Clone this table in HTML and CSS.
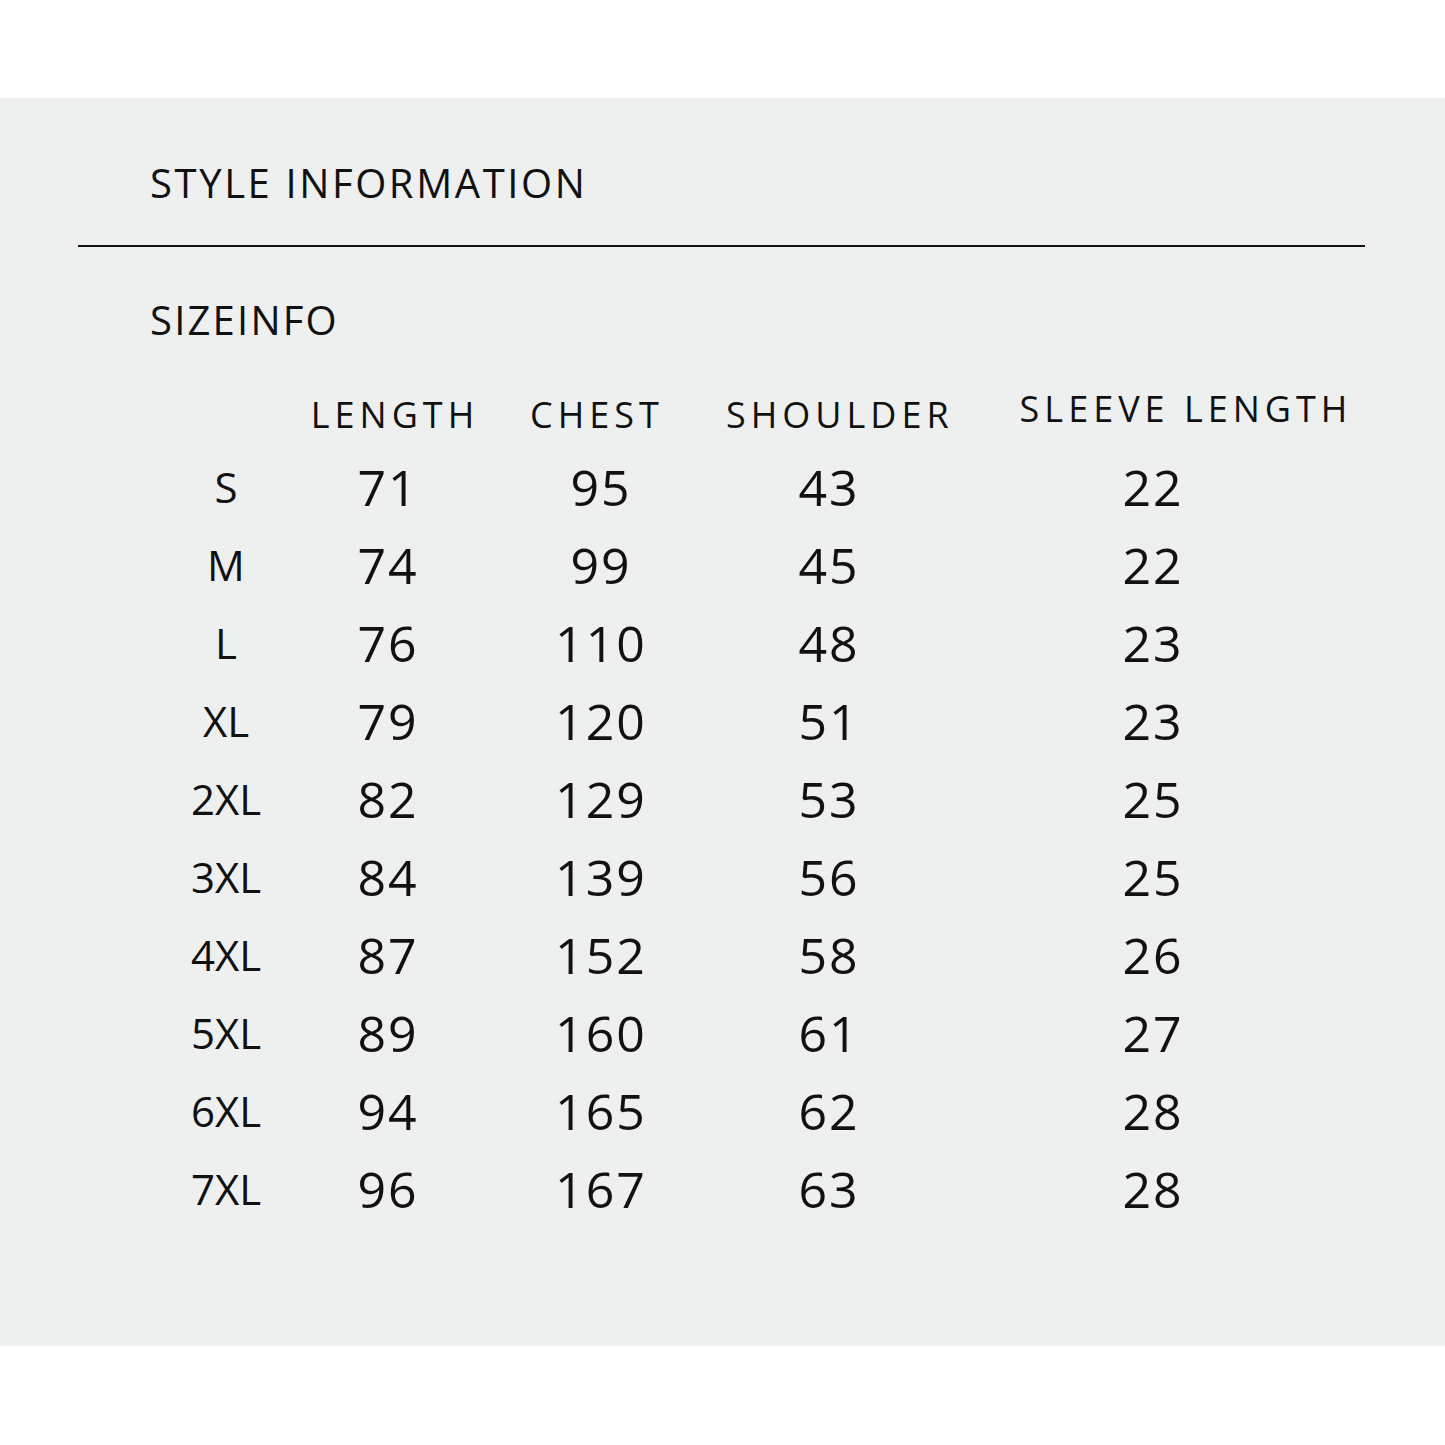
FILE: index.html
```html
<!DOCTYPE html>
<html>
<head>
<meta charset="utf-8">
<link rel="stylesheet" href="styles.css">
</head>
<body>
<div class="panel">
  <div class="title">STYLE INFORMATION</div>
  <div class="rule"></div>
  <div class="subtitle">SIZEINFO</div>
  <div class="table">
    <div class="hd"></div>
    <div class="hd h-len">LENGTH</div>
    <div class="hd h-chest">CHEST</div>
    <div class="hd h-sh">SHOULDER</div>
    <div class="hd h-sl">SLEEVE LENGTH</div>

    <div class="sz">S</div><div class="num">71</div><div class="num">95</div><div class="num">43</div><div class="num">22</div>
    <div class="sz">M</div><div class="num">74</div><div class="num">99</div><div class="num">45</div><div class="num">22</div>
    <div class="sz">L</div><div class="num">76</div><div class="num">110</div><div class="num">48</div><div class="num">23</div>
    <div class="sz">XL</div><div class="num">79</div><div class="num">120</div><div class="num">51</div><div class="num">23</div>
    <div class="sz">2XL</div><div class="num">82</div><div class="num">129</div><div class="num">53</div><div class="num">25</div>
    <div class="sz">3XL</div><div class="num">84</div><div class="num">139</div><div class="num">56</div><div class="num">25</div>
    <div class="sz">4XL</div><div class="num">87</div><div class="num">152</div><div class="num">58</div><div class="num">26</div>
    <div class="sz">5XL</div><div class="num">89</div><div class="num">160</div><div class="num">61</div><div class="num">27</div>
    <div class="sz">6XL</div><div class="num">94</div><div class="num">165</div><div class="num">62</div><div class="num">28</div>
    <div class="sz">7XL</div><div class="num">96</div><div class="num">167</div><div class="num">63</div><div class="num">28</div>
  </div>
</div>
</body>
</html>
```

FILE: styles.css
```css
html, body {
  margin: 0;
  padding: 0;
  background: #ffffff;
}
body {
  font-family: "Open Sans", "Noto Sans", sans-serif;
  color: #111111;
}
.panel {
  margin-top: 98px;
  height: 1248px;
  box-sizing: border-box;
  background: #eef0f0;
  padding-top: 65px;
}
.title {
  padding-left: 150px;
  font-size: 40px;
  line-height: 40px;
  letter-spacing: 2.6px;
  margin-bottom: 42px;
}
.rule {
  margin-left: 78px;
  width: 1287px;
  height: 2px;
  background: #141414;
}
.subtitle {
  padding-left: 150px;
  font-size: 40px;
  line-height: 40px;
  letter-spacing: 2.2px;
  margin-top: 53px;
  margin-bottom: 42px;
}
.table {
  display: grid;
  margin-left: 166px;
  grid-template-columns: 120px 204px 222px 234px 414px;
  grid-template-rows: 66px repeat(10, 78px);
}
.hd {
  font-size: 36px;
  letter-spacing: 5px;
  line-height: 66px;
  text-align: center;
  white-space: nowrap;
}
.h-len { padding-left: 14px; }
.h-chest { padding-right: 8px; }
.h-sh { padding-left: 14px; }
.h-sl { padding-left: 66px; line-height: 54px; }
.sz {
  font-size: 42px;
  line-height: 78px;
  text-align: center;
}
.num {
  font-size: 50px;
  line-height: 78px;
  text-align: center;
  letter-spacing: 2px;
}
```
